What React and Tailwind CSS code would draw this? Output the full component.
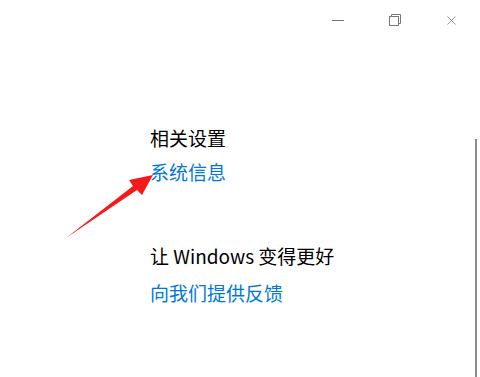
import { X } from 'lucide-react'

const FONT = { fontFamily: '"Microsoft YaHei", "Noto Sans CJK SC", "Noto Sans", sans-serif' }

function RestoreIcon() {
  return (
    <svg width="12" height="12" viewBox="0 0 12 12" fill="none" stroke="#777" strokeWidth="1">
      <rect x="0.5" y="2.5" width="9" height="9" />
      <path d="M2.5 2.5V0.5h9v9h-2" />
    </svg>
  )
}

function Arrow() {
  return (
    <svg className="absolute left-0 top-0" width="480" height="377" viewBox="0 0 480 377">
      <polygon
        fill="#f5191b"
        points="66,238 133,186 129,180 153,175 142,195 137,190"
      />
    </svg>
  )
}

export default function App() {
  return (
    <div className="relative w-[480px] h-[377px] bg-white overflow-hidden" style={FONT}>
      <div className="flex justify-end h-[40px]">
        <button className="w-[57px] flex items-center justify-center">
          <span className="block w-[12px] h-[1px] bg-[#777]" />
        </button>
        <button className="w-[57px] flex items-center justify-center">
          <RestoreIcon />
        </button>
        <button className="w-[57px] flex items-center justify-center text-[#777]">
          <X className="w-[15px] h-[15px]" strokeWidth={1.2} />
        </button>
      </div>

      <div className="flex">
        <div className="pl-[150px] pt-[86px] flex-1">
          <div className="text-[19px] leading-[24px] text-black">相关设置</div>
          <div className="mt-[10px] text-[19px] leading-[24px] text-[#0078d7]">系统信息</div>

          <div className="mt-[60px] text-[19px] leading-[24px] text-black">让 Windows 变得更好</div>
          <div className="mt-[13px] text-[19px] leading-[24px] text-[#0078d7]">向我们提供反馈</div>
        </div>
        <div className="w-[2px] mt-[99px] h-[260px] bg-[#8a8a8a] mr-[3px]" />
      </div>

      <Arrow />
    </div>
  )
}
